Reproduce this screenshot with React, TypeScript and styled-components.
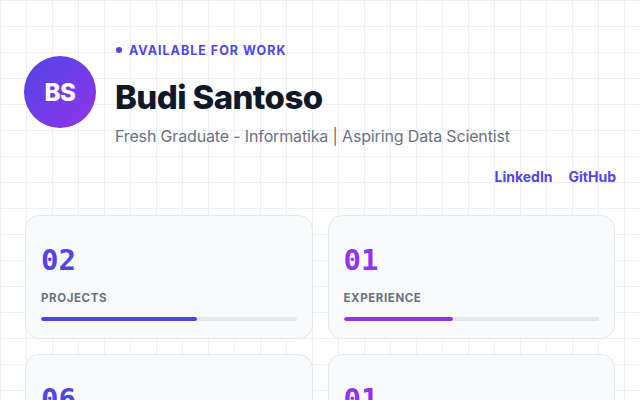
import React from "react";
import styled, { createGlobalStyle } from "styled-components";

const GlobalStyle = createGlobalStyle`
  html, body {
    margin: 0;
    padding: 0;
  }
  body {
    font-family: Inter, "Noto Sans", sans-serif;
    background-color: #ffffff;
    background-image:
      linear-gradient(to right, #eef0f4 1px, transparent 1px),
      linear-gradient(to bottom, #eef0f4 1px, transparent 1px);
    background-size: 26px 26px;
    overflow: hidden;
  }
`;

const Page = styled.main`
  padding: 42px 24px 0;
  width: 640px;
  height: 400px;
  box-sizing: border-box;
  overflow: hidden;
`;

const Header = styled.header`
  display: flex;
  align-items: flex-start;
  gap: 19px;
`;

const Avatar = styled.div`
  width: 72px;
  height: 72px;
  margin-top: 14px;
  flex-shrink: 0;
  border-radius: 50%;
  background: linear-gradient(135deg, #4f46e5 0%, #9333ea 100%);
  color: #fff;
  display: flex;
  align-items: center;
  justify-content: center;
  font-weight: 800;
  font-size: 24px;
  letter-spacing: -0.5px;
`;

const Info = styled.div`
  display: flex;
  flex-direction: column;
`;

const Status = styled.div`
  display: flex;
  align-items: center;
  gap: 7px;
  height: 16px;
  color: #4f46e5;
  font-size: 12.5px;
  font-weight: 700;
  letter-spacing: 1px;
  text-transform: uppercase;
  padding-left: 1px;
`;

const Dot = styled.span`
  width: 6px;
  height: 6px;
  border-radius: 50%;
  background: #4f46e5;
`;

const Name = styled.h1`
  margin: 19px 0 0;
  font-size: 33px;
  font-weight: 800;
  color: #111827;
  letter-spacing: -0.6px;
  line-height: 40px;
`;

const Tagline = styled.p`
  margin: 9px 0 0;
  font-size: 16px;
  color: #6b7280;
  letter-spacing: -0.15px;
  line-height: 20px;
`;

const Links = styled.nav`
  display: flex;
  justify-content: flex-end;
  gap: 16px;
  margin-top: 22px;
  line-height: 17px;
`;

const Link = styled.a`
  color: #4f46e5;
  font-size: 14px;
  font-weight: 700;
  text-decoration: none;
`;

const Stats = styled.section`
  display: grid;
  grid-template-columns: 1fr 1fr;
  gap: 15px;
  margin-top: 30px;
  padding: 0 1px;
`;

const Card = styled.div`
  background: #f9fafb;
  border: 1px solid #e5e7eb;
  border-radius: 14px;
  height: 124px;
  box-sizing: border-box;
  padding: 26px 15px 0;
  display: flex;
  flex-direction: column;
`;

const Value = styled.div<{ $color: string }>`
  font-family: "DejaVu Sans Mono", "Liberation Mono", monospace;
  font-weight: 700;
  font-size: 29px;
  line-height: 36px;
  color: ${(p) => p.$color};
`;

const Label = styled.div`
  margin-top: 12px;
  font-size: 11.5px;
  line-height: 16px;
  font-weight: 700;
  letter-spacing: 0.6px;
  color: #6b7280;
  text-transform: uppercase;
`;

const Track = styled.div`
  margin-top: 11px;
  height: 4px;
  border-radius: 2px;
  background: #e5e7eb;
  overflow: hidden;
`;

const Fill = styled.div<{ $color: string }>`
  height: 100%;
  border-radius: 2px;
  background: ${(p) => p.$color};
`;

const stats = [
  { value: "02", label: "Projects", color: "#4f46e5", pct: 61 },
  { value: "01", label: "Experience", color: "#9333ea", pct: 43 },
  { value: "06", label: "Skills", color: "#4f46e5", pct: 75 },
  { value: "01", label: "Certificates", color: "#9333ea", pct: 30 },
];

export default function App() {
  return (
    <>
      <GlobalStyle />
      <Page>
        <Header>
          <Avatar>BS</Avatar>
          <Info>
            <Status>
              <Dot />
              Available for work
            </Status>
            <Name>Budi Santoso</Name>
            <Tagline>Fresh Graduate - Informatika | Aspiring Data Scientist</Tagline>
          </Info>
        </Header>
        <Links>
          <Link href="#">LinkedIn</Link>
          <Link href="#">GitHub</Link>
        </Links>
        <Stats>
          {stats.map((s, i) => (
            <Card key={i}>
              <Value $color={s.color}>{s.value}</Value>
              <Label>{s.label}</Label>
              <Track>
                <Fill $color={s.color} style={{ width: `${s.pct}%` }} />
              </Track>
            </Card>
          ))}
        </Stats>
      </Page>
    </>
  );
}
